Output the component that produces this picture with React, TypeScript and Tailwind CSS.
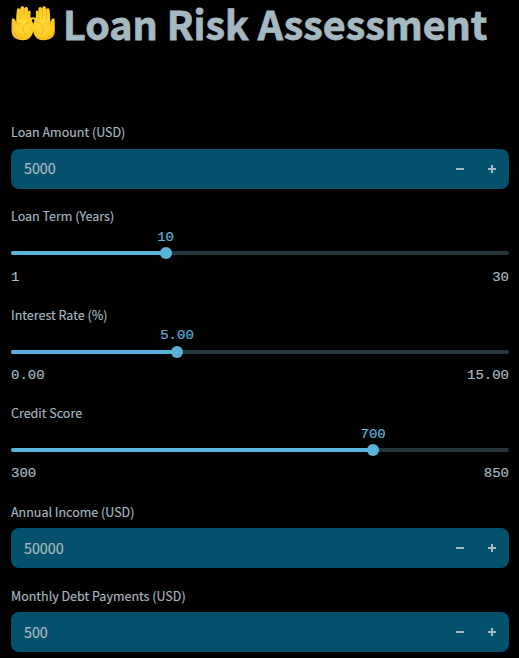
import React from "react";

function PalmsUp() {
  return (
    <svg className="h-[37px] w-[46px] shrink-0" viewBox="0 0 46 37" aria-hidden="true">
      <defs>
        <radialGradient id="skin" cx="0.55" cy="0.5" r="0.65">
          <stop offset="0" stopColor="#ffdb38" />
          <stop offset="0.7" stopColor="#ffcc22" />
          <stop offset="1" stopColor="#f7ac1c" />
        </radialGradient>
        <g id="palm">
          <path
            d="M0.7 15.2C0.5 13 2.7 12.5 3.6 14.4L5.2 17.6C5.2 13.5 5.3 8.5 6 4.6C6.4 2.6 8.9 2.7 9 4.7L9.4 2.9C9.8 0.7 13 0.6 13.1 2.9L13.2 4C13.8 1.3 17 1.5 17 4L16.9 7.2C17.3 4.9 19.7 5.2 19.6 7.5L19.4 12.6L22.7 12.6V14.2C21.3 14.2 20.7 14.5 20.9 15.5C21.4 17.2 22.5 18.7 22.6 21.5C22.8 29.5 19.5 35.2 12.1 35.2C4.6 35.2 0.7 32 0.5 25.5Z"
            fill="url(#skin)"
          />
          <path
            d="M9 4.7L9 14.5M13.2 4L13 14M16.9 7.2L16.5 14.5M3.8 14.8L5.8 19.2C7.2 18.4 9.5 18.5 11 19.3M19.3 17.2C15.8 17.2 12.8 20 12.3 23.2C12 26 13 28.3 14.5 29.5M5 31C8.5 34 14.2 34.2 18 32"
            fill="none"
            stroke="#f0ab20"
            strokeWidth="0.7"
            strokeLinecap="round"
          />
        </g>
      </defs>
      <use href="#palm" />
      <use href="#palm" transform="translate(44.4 0) scale(-1 1)" />
    </svg>
  );
}

function Label({ children }: { children: React.ReactNode }) {
  return <label className="block h-[28px] whitespace-nowrap text-[12.5px] leading-[22px] [-webkit-text-stroke:0.15px_#a6b8c0]">{children}</label>;
}

type NumberFieldProps = { label: string; value: string; labelClass?: string; valueClass?: string };

function NumberField({ label, value, labelClass = "", valueClass = "" }: NumberFieldProps) {
  return (
    <div className="h-[84px]">
      <div className={`h-[28px] ${labelClass}`}>
        <Label>{label}</Label>
      </div>
      <div className="flex h-10 items-center rounded-lg bg-[#04516c] pl-[13px] text-[14.3px]">
        <span className={`flex-1 leading-10 [-webkit-text-stroke:0.2px_#a6b8c0] ${valueClass}`}>{value}</span>
        <button className="flex h-10 w-8 items-center justify-center" aria-label="Decrease">
          <span className="h-[2px] w-2 bg-[#a6b8c0]" />
        </button>
        <button className="flex h-10 w-8 items-center justify-center" aria-label="Increase">
          <svg className="size-2" viewBox="0 0 8 8" shapeRendering="crispEdges">
            <path d="M3 0h2v3h3v2H5v3H3V5H0V3h3z" fill="#a6b8c0" />
          </svg>
        </button>
        <span className="w-px" />
      </div>
    </div>
  );
}

type SliderProps = {
  label: string;
  value: string;
  min: string;
  max: string;
  className: string;
  valueTop?: string;
  rangePad?: string;
};

function Slider({
  label,
  value,
  min,
  max,
  className,
  valueTop = "-top-[22px]",
  rangePad = "pt-[11px]",
}: SliderProps) {
  const percent = ((Number(value) - Number(min)) / (Number(max) - Number(min))) * 100;
  return (
    <div className={className}>
      <Label>{label}</Label>
      <div className="h-[18px]" />
      <div className="relative h-1 rounded-full bg-[#26343b]">
        <div className="h-1 rounded-full bg-[#5ab4da]" style={{ width: `${percent}%` }} />
        <div
          className="absolute -top-1 size-3 -translate-x-1/2 rounded-full bg-[#5ab4da]"
          style={{ left: `${percent}%` }}
        />
        <div
          className={`absolute ${valueTop} -translate-x-1/2 scale-y-[0.93] font-['Liberation_Mono',monospace] text-sm leading-4 text-[#5ab4da] [-webkit-text-stroke:0.2px_#5ab4da]`}
          style={{ left: `${percent}%` }}
        >
          {value}
        </div>
      </div>
      <div
        className={`flex justify-between font-['Liberation_Mono',monospace] text-sm leading-5 [-webkit-text-stroke:0.2px_#a6b8c0] ${rangePad}`}
      >
        <span className="scale-y-[0.93]">{min}</span>
        <span className="scale-y-[0.93]">{max}</span>
      </div>
    </div>
  );
}

export default function App() {
  return (
    <main className="h-[658px] w-[519px] bg-black pl-[11px] pr-[10px] font-['Noto_Sans_CJK_SC',sans-serif] text-[#a6b8c0]">
      <header className="flex h-[121px] items-start">
        <div className="pt-[5px]">
          <PalmsUp />
        </div>
        <h1 className="ml-[6px] whitespace-nowrap text-[39.4px] font-bold leading-[46px] [-webkit-text-stroke:0.8px_#a6b8c0]">
          Loan Risk Assessment
        </h1>
      </header>
      <NumberField label="Loan Amount (USD)" value="5000" valueClass="pb-[2px]" />
      <Slider label="Loan Term (Years)" value="10" min="1" max="30" className="h-[99px]" rangePad="pt-[12px]" />
      <Slider
        label="Interest Rate (%)"
        value="5.00"
        min="0.00"
        max="15.00"
        className="h-[98px]"
        valueTop="-top-[23px]"
      />
      <Slider label="Credit Score" value="700" min="300" max="850" className="h-[98px]" />
      <NumberField label="Annual Income (USD)" value="50000" labelClass="pt-px" />
      <NumberField label="Monthly Debt Payments (USD)" value="500" labelClass="pt-px" />
    </main>
  );
}
